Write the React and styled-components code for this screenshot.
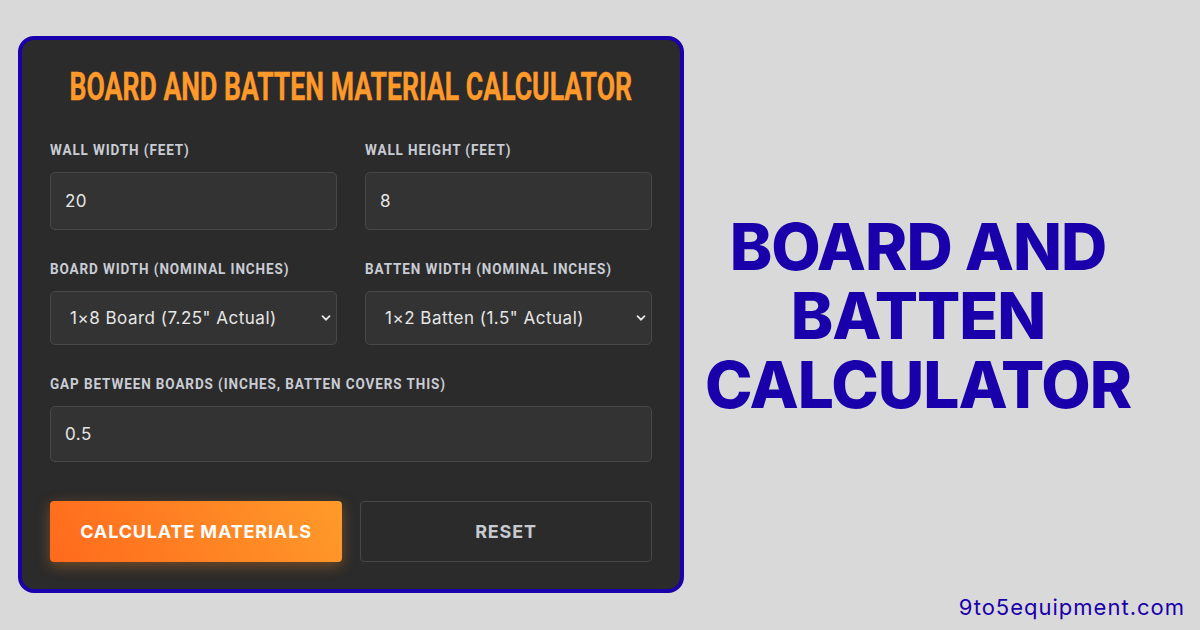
import React from 'react';
import styled, { createGlobalStyle } from 'styled-components';

const GlobalStyle = createGlobalStyle`
  html, body {
    margin: 0;
    padding: 0;
    background: #d9d9d9;
  }
`;

const Page = styled.div`
  width: 1200px;
  height: 630px;
  display: flex;
  box-sizing: border-box;
  padding: 36px 15px 0 18px;
  overflow: hidden;
`;

const Card = styled.div`
  width: 666px;
  height: 557px;
  box-sizing: border-box;
  background: #2b2b2b;
  border: 4px solid #1a00aa;
  border-radius: 16px;
  padding: 25px 28px 27px;
  display: flex;
  flex-direction: column;
`;

// condensed display face, narrowed from Roboto
const Title = styled.h1`
  margin: 0 0 32px;
  height: 44px;
  display: flex;
  justify-content: center;
  white-space: nowrap;
  color: #ff9a2a;
  font-family: Roboto, 'Liberation Sans', sans-serif;
  font-weight: 700;
  font-size: 38px;
  line-height: 44px;
  -webkit-text-stroke: 0.4px #ff9a2a;

  span {
    flex: none;
    transform: scaleX(0.7);
  }
`;

const Row = styled.div`
  display: grid;
  grid-template-columns: 1fr 1fr;
  gap: 28px;
  margin-bottom: 30px;
`;

const Field = styled.div`
  display: flex;
  flex-direction: column;
`;

const Label = styled.label`
  display: block;
  margin-bottom: 13px;
  white-space: nowrap;
  color: #c9ccd4;
  font-family: Roboto, 'Liberation Sans', sans-serif;
  font-weight: 700;
  font-size: 15px;
  line-height: 18px;
  letter-spacing: 1px;
  transform: scaleX(0.9);
  transform-origin: left center;
`;

const boxStyle = `
  width: 100%;
  box-sizing: border-box;
  background: #333333;
  border: 1px solid #484848;
  border-radius: 5px;
  color: #e6e6e6;
  font-family: Inter, 'Open Sans', sans-serif;
  font-size: 17px;
  letter-spacing: 0.5px;
  outline: none;
`;

const Input = styled.input`
  ${boxStyle}
  height: ${({ $h }) => $h || 58}px;
  padding: 0 14px;
`;

const SelectWrap = styled.div`
  position: relative;
`;

const Select = styled.select`
  ${boxStyle}
  appearance: none;
  height: 54px;
  padding: 0 30px 0 19px;
`;

const Chevron = styled.svg`
  position: absolute;
  right: 6px;
  top: 50%;
  margin-top: -5px;
  pointer-events: none;
`;

const Buttons = styled.div`
  display: grid;
  grid-template-columns: 1fr 1fr;
  gap: 18px;
  margin-top: auto;
`;

const Button = styled.button`
  height: 61px;
  border-radius: 4px;
  font-family: Inter, 'Open Sans', sans-serif;
  font-weight: 700;
  font-size: 18px;
  letter-spacing: 0.85px;
  cursor: pointer;
  border: ${({ $primary }) => ($primary ? 'none' : '1px solid #474747')};
  background: ${({ $primary }) =>
    $primary ? 'linear-gradient(60deg, #ff6a1c 0%, #ff9a2a 100%)' : 'transparent'};
  color: ${({ $primary }) => ($primary ? '#ffffff' : '#c7cad1')};
  box-shadow: ${({ $primary }) => ($primary ? '0 4px 14px rgba(255, 140, 40, 0.35)' : 'none')};
`;

const Side = styled.div`
  flex: 1;
  display: flex;
  flex-direction: column;
  padding-left: 4px;
`;

const Heading = styled.h2`
  margin: auto 0;
  width: 460px;
  text-align: center;
  color: #1a00aa;
  font-family: Inter, 'DejaVu Sans', sans-serif;
  font-weight: 800;
  font-size: 64px;
  line-height: 69px;
  letter-spacing: -1px;
`;

const Domain = styled.div`
  align-self: flex-end;
  margin-bottom: 10px;
  color: #1a00aa;
  font-family: Inter, 'DejaVu Sans', sans-serif;
  font-size: 22px;
  letter-spacing: 1px;
`;

const ChevronIcon = () => (
  <Chevron width="10" height="10" viewBox="0 0 10 10">
    <path d="M1.5 3.2 L5 6.7 L8.5 3.2" fill="none" stroke="#e6e6e6" strokeWidth="1.8" strokeLinecap="round" />
  </Chevron>
);

export default function App() {
  return (
    <>
      <GlobalStyle />
      <Page>
        <Card>
          <Title>
            <span>BOARD AND BATTEN MATERIAL CALCULATOR</span>
          </Title>
          <Row>
            <Field>
              <Label>WALL WIDTH (FEET)</Label>
              <Input defaultValue="20" />
            </Field>
            <Field>
              <Label>WALL HEIGHT (FEET)</Label>
              <Input defaultValue="8" />
            </Field>
          </Row>
          <Row>
            <Field>
              <Label>BOARD WIDTH (NOMINAL INCHES)</Label>
              <SelectWrap>
                <Select defaultValue="8">
                  <option value="8">1×8 Board (7.25" Actual)</option>
                </Select>
                <ChevronIcon />
              </SelectWrap>
            </Field>
            <Field>
              <Label>BATTEN WIDTH (NOMINAL INCHES)</Label>
              <SelectWrap>
                <Select defaultValue="2">
                  <option value="2">1×2 Batten (1.5" Actual)</option>
                </Select>
                <ChevronIcon />
              </SelectWrap>
            </Field>
          </Row>
          <Field>
            <Label>GAP BETWEEN BOARDS (INCHES, BATTEN COVERS THIS)</Label>
            <Input defaultValue="0.5" $h={56} />
          </Field>
          <Buttons>
            <Button $primary>CALCULATE MATERIALS</Button>
            <Button>RESET</Button>
          </Buttons>
        </Card>
        <Side>
          <Heading>BOARD AND BATTEN CALCULATOR</Heading>
          <Domain>9to5equipment.com</Domain>
        </Side>
      </Page>
    </>
  );
}
